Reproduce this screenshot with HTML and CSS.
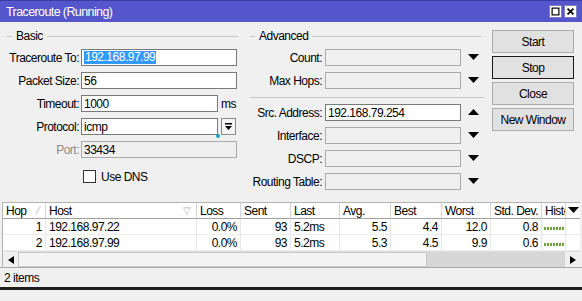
FILE: index.html
```html
<!DOCTYPE html>
<html>
<head>
<meta charset="utf-8">
<link rel="stylesheet" href="styles.css">
</head>
<body>
<div class="window">
  <div class="titlebar">
    <span class="title">Traceroute (Running)</span>
    <div class="tb-btns">
      <span class="tb-btn"><svg width="13" height="13" viewBox="0 0 13 13"><rect x="2.5" y="2.5" width="8" height="8" fill="none" stroke="#000" stroke-width="1.4"/></svg></span>
      <span class="tb-btn"><svg width="13" height="13" viewBox="0 0 13 13"><path d="M3 3 L10 10 M10 3 L3 10" stroke="#000" stroke-width="2"/></svg></span>
    </div>
  </div>
  <div class="main">
    <section class="group basic">
      <div class="legend"><span>Basic</span></div>
      <div class="form">
        <label class="lbl">Traceroute To:</label>
        <div class="field"><span class="input"><span class="sel">192.168.97.99</span></span></div>
        <label class="lbl">Packet Size:</label>
        <div class="field"><span class="input">56</span></div>
        <label class="lbl">Timeout:</label>
        <div class="field"><span class="input short">1000</span><span class="unit">ms</span></div>
        <label class="lbl">Protocol:</label>
        <div class="field"><span class="input short">icmp<i class="dot"></i></span><span class="ddbtn"><svg width="9" height="9" viewBox="0 0 9 9"><rect x="1" y="1" width="7" height="1.5" fill="#000"/><path d="M1 4 L8 4 L4.5 8 Z" fill="#000"/></svg></span></div>
        <label class="lbl dis">Port:</label>
        <div class="field"><span class="input disabled">33434</span></div>
        <span></span>
        <div class="check"><span class="cb"></span><span>Use DNS</span></div>
      </div>
    </section>
    <section class="group adv">
      <div class="legend"><span>Advanced</span></div>
      <div class="form">
        <label class="lbl">Count:</label>
        <span class="input disabled"></span>
        <span class="arrow"><svg width="11" height="7" viewBox="0 0 11 7"><path d="M0 0 L11 0 L5.5 6 Z" fill="#000"/></svg></span>
        <label class="lbl">Max Hops:</label>
        <span class="input disabled"></span>
        <span class="arrow"><svg width="11" height="7" viewBox="0 0 11 7"><path d="M0 0 L11 0 L5.5 6 Z" fill="#000"/></svg></span>
        <div class="sep"></div>
        <label class="lbl">Src. Address:</label>
        <span class="input">192.168.79.254</span>
        <span class="arrow"><svg width="11" height="7" viewBox="0 0 11 7"><path d="M0 6 L11 6 L5.5 0 Z" fill="#000"/></svg></span>
        <label class="lbl">Interface:</label>
        <span class="input disabled"></span>
        <span class="arrow"><svg width="11" height="7" viewBox="0 0 11 7"><path d="M0 0 L11 0 L5.5 6 Z" fill="#000"/></svg></span>
        <label class="lbl">DSCP:</label>
        <span class="input disabled"></span>
        <span class="arrow"><svg width="11" height="7" viewBox="0 0 11 7"><path d="M0 0 L11 0 L5.5 6 Z" fill="#000"/></svg></span>
        <label class="lbl">Routing Table:</label>
        <span class="input disabled"></span>
        <span class="arrow"><svg width="11" height="7" viewBox="0 0 11 7"><path d="M0 0 L11 0 L5.5 6 Z" fill="#000"/></svg></span>
      </div>
    </section>
    <div class="buttons">
      <button class="btn">Start</button>
      <button class="btn default">Stop</button>
      <button class="btn">Close</button>
      <button class="btn">New Window</button>
    </div>
  </div>
  <div class="table">
    <div class="row head">
      <span class="c">Hop<i class="sort">&#8260;</i></span>
      <span class="c">Host<i class="sort tri">&#9661;</i></span>
      <span class="c">Loss</span>
      <span class="c">Sent</span>
      <span class="c">Last</span>
      <span class="c">Avg.</span>
      <span class="c">Best</span>
      <span class="c">Worst</span>
      <span class="c">Std. Dev.</span>
      <span class="c clip">Histo</span>
      <span class="c hbtn"><svg width="11" height="7" viewBox="0 0 11 7"><path d="M0 0 L11 0 L5.5 6 Z" fill="#000"/></svg></span>
    </div>
    <div class="row">
      <span class="c r">1</span>
      <span class="c">192.168.97.22</span>
      <span class="c r">0.0%</span>
      <span class="c r">93</span>
      <span class="c">5.2ms</span>
      <span class="c r">5.5</span>
      <span class="c r">4.4</span>
      <span class="c r">12.0</span>
      <span class="c r">0.8</span>
      <span class="c histo"><i class="bars"></i></span>
      <span class="c end"></span>
    </div>
    <div class="row">
      <span class="c r">2</span>
      <span class="c">192.168.97.99</span>
      <span class="c r">0.0%</span>
      <span class="c r">93</span>
      <span class="c">5.2ms</span>
      <span class="c r">5.3</span>
      <span class="c r">4.5</span>
      <span class="c r">9.9</span>
      <span class="c r">0.6</span>
      <span class="c histo"><i class="bars b2"></i></span>
      <span class="c end"></span>
    </div>
    <div class="filler"></div>
    <div class="hscroll">
      <span class="sbtn"><svg width="6" height="8" viewBox="0 0 6 8"><path d="M6 0 L6 8 L0 4 Z" fill="#000"/></svg></span>
      <span class="thumb"></span>
      <span class="track"></span>
      <span class="sbtn"><svg width="6" height="8" viewBox="0 0 6 8"><path d="M0 0 L0 8 L6 4 Z" fill="#000"/></svg></span>
    </div>
  </div>
  <div class="status"><span>2 items</span></div>
  <div class="bottomline"></div>
</div>
</body>
</html>
```

FILE: styles.css
```css
* { box-sizing: border-box; }
html, body { margin: 0; padding: 0; }
body {
  width: 582px;
  height: 301px;
  overflow: hidden;
  font-family: "Liberation Sans", Arial, sans-serif;
  font-size: 12px;
  letter-spacing: -0.5px;
  color: #000;
}
.window {
  width: 582px;
  height: 301px;
  background: #f0f0f0;
  display: flex;
  flex-direction: column;
}
.titlebar {
  height: 22px;
  flex: none;
  background: #5656cc;
  border-top: 1px solid #3c3ca8;
  display: flex;
  align-items: center;
  justify-content: space-between;
  padding: 0 5px 0 6px;
  color: #fff;
}
.title { font-size: 12.5px; letter-spacing: -0.6px; }
.tb-btns { display: flex; gap: 2px; }
.tb-btn {
  width: 13px; height: 13px;
  background: #fff;
  border: 1px solid #8080c0;
  display: flex; align-items: center; justify-content: center;
}
.tb-btn svg { display: block; }
.main {
  height: 180px;
  flex: none;
  display: flex;
  padding: 7px 0 0 7px;
}
.group { width: 231px; flex: none; }
.adv { margin-left: 12px; }
.legend {
  height: 14px;
  display: flex;
  align-items: center;
}
.legend::before {
  content: "";
  width: 5px;
  border-top: 1px solid #c8c8c8;
}
.legend::after {
  content: "";
  flex: 1;
  border-top: 1px solid #c8c8c8;
}
.legend span { padding: 0 4px; }
.form {
  margin-top: 6px;
  display: grid;
  grid-template-columns: 72px 156px;
  column-gap: 2px;
  row-gap: 6px;
  grid-auto-rows: 17px;
  align-items: center;
}
.adv .form {
  grid-template-columns: 72px 136px 20px;
  column-gap: 3px;
  grid-template-rows: 17px 17px 3px 17px 17px 17px 17px;
}
.lbl { text-align: right; white-space: nowrap; }
.lbl.dis { color: #8c8c8c; }
.field { display: flex; align-items: center; height: 17px; }
.input {
  position: relative;
  display: flex;
  align-items: center;
  height: 17px;
  width: 100%;
  background: #fff;
  border: 1px solid #7a7a7a;
  padding: 0 2px;
  white-space: nowrap;
}
.input.short { width: 137px; flex: none; }
.input.disabled { background: #f0f0f0; border-color: #ababab; }
.sel { background: #3399ff; color: #fff; padding: 0 1px; line-height: 13px; }
.unit { margin-left: 3px; }
.dot {
  position: absolute;
  right: -3px;
  bottom: -4px;
  width: 4px; height: 4px;
  border-radius: 50%;
  background: #1ba1c4;
}
.ddbtn {
  margin-left: 3px;
  width: 15px; height: 17px;
  border: 1px solid #8a8a8a;
  background: #f4f4f4;
  display: flex; align-items: center; justify-content: center;
}
.check { display: flex; align-items: center; gap: 5px; padding-left: 2px; margin-top: 8px; }
.cb { width: 13px; height: 13px; background: #fff; border: 1px solid #333; }
.arrow { display: flex; align-items: center; justify-content: center; padding-right: 2px; }
.sep {
  grid-column: 1 / -1;
  height: 3px;
  border-bottom: 1px solid #c8c8c8;
  align-self: start;
}
.buttons {
  margin-left: 11px;
  width: 82px;
  display: flex;
  flex-direction: column;
  gap: 3px;
  padding-top: 1px;
}
.btn {
  height: 23px;
  font: inherit;
  letter-spacing: -0.5px;
  background: #e1e1e1;
  border: 1px solid #adadad;
  color: #000;
  padding: 0;
}
.btn.default { border: 1px solid #1a1a1a; }
.table {
  margin-left: 2px;
  width: 578px;
  flex: none;
  background: #fff;
  border-top: 1px solid #b4b4b4;
  border-left: 1px solid #b4b4b4;
  display: flex;
  flex-direction: column;
}
.row {
  display: grid;
  grid-template-columns: 43px 151px 44px 50px 49px 51px 51px 49px 51px 24px 14px;
  height: 16px;
  align-items: stretch;
}
.row .c {
  border-right: 1px solid #e6e6e6;
  border-bottom: 1px solid #ececec;
  padding: 0 3px;
  white-space: nowrap;
  overflow: hidden;
  display: flex;
  align-items: center;
}
.row .c.r { justify-content: flex-end; }
.head { height: 16px; }
.head .c {
  border-right: 1px solid #d5d5d5;
  border-bottom: 1px solid #a0a0a0;
  justify-content: space-between;
}
.head .c.clip { padding-right: 0; justify-content: flex-start; }
.sort { font-style: normal; color: #b0b0b0; font-size: 10px; margin-right: 3px; }
.head .hbtn { justify-content: center; padding: 0; border-right: none; background: #fff; }
.row .end { border-right: none; padding: 0; }
.histo { padding: 0 0 0 2px !important; }
.bars {
  display: block;
  width: 100%;
  height: 3px;
  margin-top: 3px;
  background: repeating-linear-gradient(90deg, #6aa13a 0 2px, transparent 2px 3px);
}
.filler { flex: 1; }
.hscroll {
  height: 16px;
  display: flex;
  border-top: 1px solid #e0e0e0;
  background: #f0f0f0;
}
.sbtn {
  width: 15px;
  display: flex; align-items: center; justify-content: center;
  background: #f0f0f0;
}
.thumb { width: 409px; background: #f4f4f4; border: 1px solid #c8c8c8; }
.track { flex: 1; background: #d6d6d6; }
.status {
  height: 20px;
  flex: none;
  border-top: 1px solid #a8a8a8;
  padding-left: 4px;
  display: flex;
  align-items: center;
}
.bottomline { height: 3px; flex: none; background: #1e1e1e; }
```
